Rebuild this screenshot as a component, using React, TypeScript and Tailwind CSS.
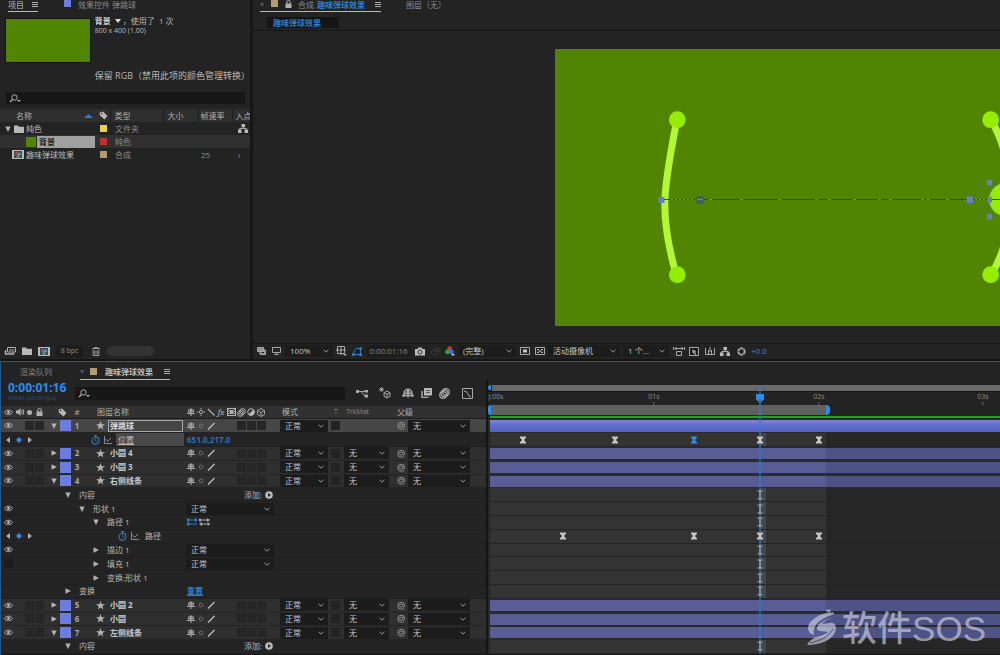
import React from "react";
import type { ReactNode } from "react";

/* ---------- icons ---------- */

type IconProps = { className?: string };

const Svg = ({ w, h, vb, className = "", children }: { w: number; h: number; vb?: string; className?: string; children: ReactNode }) => (
  <svg width={w} height={h} viewBox={vb ?? `0 0 ${w} ${h}`} fill="none" stroke="currentColor" strokeWidth="1" className={`shrink-0 ${className}`} aria-hidden="true">
    {children}
  </svg>
);

const MenuIcon = ({ className }: IconProps) => (
  <Svg w={6} h={7} className={className}><path d="M0 1.5h6M0 3.5h6M0 5.5h6" strokeWidth=".9" /></Svg>
);
const SearchIcon = () => (
  <Svg w={13} h={9} className="text-[#b5b5b5]"><circle cx="5.5" cy="3.5" r="2.7" /><path d="M3.5 5.5 1 8" strokeWidth="1.3" /><path d="M8 6h4l-2 2z" fill="currentColor" stroke="none" /></Svg>
);
const TagIcon = () => (
  <Svg w={9} h={9} className="text-[#b8b8b8]"><path d="M.5 1.5 4 .5 8.5 5 5.500 8.500 1 4.500z" fill="currentColor" stroke="none" /><circle cx="2.600" cy="2.600" r=".8" fill="#2b2b2b" stroke="none" /></Svg>
);
const FolderIcon = () => (
  <Svg w={10} h={8} className="text-[#b8b8b8]"><path d="M0 .5h4l1 1.200h5V8H0z" fill="currentColor" stroke="none" /></Svg>
);
const CompIcon = () => (
  <Svg w={12} h={9}><rect width="12" height="9" fill="#b9b9b9" stroke="none" /><rect x="2" y="1" width="8" height="7" fill="#3c4a58" stroke="none" /><circle cx="4.600" cy="3.500" r="1.600" fill="#c64b52" stroke="none" /><circle cx="7.500" cy="4" r="1.600" fill="#4b9fd8" stroke="none" /><path d="M4 7.500 6 4.500l2 3z" fill="#59b06c" stroke="none" /></Svg>
);
const FlowIcon = () => (
  <Svg w={10} h={9} className="text-[#b8b8b8]"><rect x="3.500" y="0" width="3.500" height="3" fill="currentColor" stroke="none" /><rect x="0" y="5.500" width="3.500" height="3.500" fill="currentColor" stroke="none" /><rect x="6.500" y="5.500" width="3.500" height="3.500" fill="currentColor" stroke="none" /><path d="M5.200 3v1.500M1.800 6V4.400h6.500V6" /></Svg>
);
const TrashIcon = () => (
  <Svg w={8} h={9} className="text-[#a0a0a0]"><path d="M0 1.500h8M2.500 1V.5h3V1M1.200 2.500v6h5.600v-6M3 3.500v4M5 3.500v4" /></Svg>
);
const FootageIcon = () => (
  <Svg w={12} h={8} className="text-[#b0b0b0]"><path d="M3.500.5h8v4.500h-8z" /><path d="M5 3h5" /><path d="M1.500 3v4h8V5.500" strokeWidth="1.500" /></Svg>
);
const LockIcon = () => (
  <Svg w={7} h={8} className="text-[#b0b0b0]"><rect x=".5" y="3.500" width="6" height="4.500" fill="currentColor" stroke="none" /><path d="M1.800 4V2a1.700 1.500 0 0 1 3.400 0v2" /></Svg>
);
const EyeIcon = () => (
  <Svg w={9} h={7} className="text-[#b5b5b5]"><path d="M.5 3.500C2.200.4 6.800.4 8.500 3.500 6.800 6.300 2.200 6.300.5 3.500z" /><circle cx="4.500" cy="3.200" r="1.500" fill="currentColor" stroke="none" /></Svg>
);
const SpeakerIcon = () => (
  <Svg w={9} h={8} className="text-[#b5b5b5]"><path d="M0 2.500h1.800L4.500.3v7.400L1.800 5.500H0z" fill="currentColor" stroke="none" /><path d="M5.500 2.500q1 1.500 0 3M6.800 1q2 3 0 6" /></Svg>
);
const StarIcon = () => (
  <Svg w={9} h={9} className="text-[#b5b5b5]"><path d="M4.500 0 5.600 3.200H9L6.300 5.200l1 3.300L4.500 6.500 1.700 8.500l1-3.300L0 3.200h3.400z" fill="currentColor" stroke="none" /></Svg>
);
const ShyIcon = () => (
  <Svg w={8} h={8} className="text-[#a8a8a8]"><path d="M1 4.500V3a3 2.600 0 0 1 6 0v1.500z" fill="currentColor" stroke="none" /><path d="M4 4v4M0 5.500h8" strokeWidth="1.100" /><path d="M2.700 1.500v2M5.300 1.500v2" stroke="#2d2d2d" strokeWidth=".6" /></Svg>
);
const SunIcon = ({ className = "text-[#a8a8a8]" }: IconProps) => (
  <Svg w={8} h={8} className={className}><circle cx="4" cy="4" r="1.600" /><path d="M4 0v1.500M4 6.500V8M0 4h1.500M6.500 4H8" /></Svg>
);
const DotSunIcon = () => (
  <Svg w={6} h={6} className="text-[#7a7a7a]"><circle cx="3" cy="3" r="1.900" strokeWidth=".8" /></Svg>
);
const SlashIcon = () => (
  <Svg w={8} h={8} className="text-[#c0c0c0]"><path d="M1 7.500 7.500 1" strokeWidth="1.200" /></Svg>
);
const BackSlashIcon = () => (
  <Svg w={8} h={8} className="text-[#b0b0b0]"><path d="M1 1l6.500 6.500" strokeWidth="1.200" /></Svg>
);
const FilmIcon = () => (
  <Svg w={9} h={8} className="text-[#b0b0b0]"><rect x=".5" y=".5" width="8" height="7" /><rect x="2.500" y="2" width="4" height="4" fill="currentColor" stroke="none" /><path d="M1.500 1v6M7.500 1v6" strokeDasharray="1 1" /></Svg>
);
const BlurIcon = ({ size = 9 }: { size?: number }) => (
  <Svg w={size} h={size} vb="0 0 9 9" className="text-[#a8a8a8]"><circle cx="5.700" cy="3.300" r="2.700" /><circle cx="4.500" cy="4.500" r="2.700" /><circle cx="3.300" cy="5.700" r="2.700" /></Svg>
);
const AdjustIcon = () => (
  <Svg w={8} h={8} className="text-[#b8b8b8]"><circle cx="4" cy="4" r="3.300" /><path d="M6.500 1.500A3.500 3.500 0 1 1 1.500 6.500z" fill="currentColor" stroke="none" /></Svg>
);
const CubeIcon = ({ className = "text-[#a8a8a8]" }: IconProps) => (
  <Svg w={8} h={9} className={className}><path d="M4 .6 7.500 2.500v4L4 8.400.5 6.500v-4zM.5 2.500 4 4.500l3.500-2M4 4.500v4" strokeWidth=".9" /></Svg>
);
const WhipIcon = () => (
  <Svg w={9} h={9} className="text-[#9a9a9a]"><path d="M5.800 3v2.500c.3 1 2 .8 2-1A3.500 3.500 0 1 0 4.500 8.200c1.500 0 2.500-.5 3-1.200M5.800 4.200a1.600 1.600 0 1 0-.1 1" strokeWidth=".9" /></Svg>
);
const StopwatchIcon = () => (
  <Svg w={9} h={10} className="text-[#2d7dca]"><circle cx="4.500" cy="5.700" r="3.400" strokeWidth="1.100" /><path d="M4.500 5.700V3.800M3 .6h3M4.500.5v2M7.300 2l.8.800M4.500 5.700l1.400.8" /></Svg>
);
const GraphLineIcon = () => (
  <Svg w={8} h={8} className="text-[#8b8b8b]"><path d="M.5 0v7.500H8M1.500 3l2 2.500L7 2" /></Svg>
);
const Twirl = ({ open }: { open: boolean }) => (
  <Svg w={6} h={6} className="text-[#b0b0b0]"><path d={open ? "M.3.500h5.400L3 6z" : "M.5.3v5.400L6 3z"} fill="currentColor" stroke="none" /></Svg>
);
const Chevron = () => (
  <Svg w={6} h={4} className="pointer-events-none absolute right-1 top-1/2 -translate-y-1/2 text-[#9a9a9a]"><path d="M.5.700 3 3.200 5.500.700" /></Svg>
);
const Hourglass = ({ className = "text-[#c4c4c4]" }: IconProps) => (
  <Svg w={7} h={8} className={className}><path d="M.5.500h6v1.300L4.500 4l2 2.200v1.300h-6V6.200l2-2.200-2-2.200z" fill="currentColor" stroke="none" /></Svg>
);
const Beam = () => (
  <Svg w={7} h={10} className="text-[#a3b4c4]"><path d="M1 1h5M1 9h5M3.500 1v8" strokeWidth="1.200" /></Svg>
);

/* ---------- controls ---------- */

const Select = ({ label, value, className = "" }: { label: string; value: string; className?: string }) => (
  <span className={`relative block h-[12px] shrink-0 bg-[#1c1c1c] ${className}`}>
    <select aria-label={label} defaultValue={value} className="block h-full w-full appearance-none truncate bg-transparent pl-[5px] pr-2 text-[8px] leading-[12px] text-[#c4c4c4] outline-none">
      <option>{value}</option>
    </select>
    <Chevron />
  </span>
);

const IconButton = ({ label, children, className = "" }: { label: string; children: ReactNode; className?: string }) => (
  <button type="button" aria-label={label} className={`flex shrink-0 items-center justify-center ${className}`}>{children}</button>
);

/* ---------- project panel ---------- */

type Asset = { name: string; type: string; rate: string; swatch: string; icon: ReactNode; selected?: boolean };

const assets: Asset[] = [
  { name: "纯色", type: "文件夹", rate: "", swatch: "bg-[#e6d24c]", icon: <><span className="mr-[3px] flex"><Twirl open /></span><FolderIcon /></> },
  { name: "背景", type: "纯色", rate: "", swatch: "bg-[#b93434]", icon: <span className="ml-[21px] h-[10px] w-[10px] bg-[#528404]" />, selected: true },
  { name: "趣味弹球效果", type: "合成", rate: "25", swatch: "bg-[#b49a74]", icon: <span className="ml-[7px] flex"><CompIcon /></span> },
];

const ProjectPanel = () => (
  <section className="flex w-[250px] shrink-0 flex-col bg-[#232323]">
    <nav className="flex h-[13px] shrink-0 items-start pl-2 text-[8px] leading-[9px]">
      <button type="button" className="flex h-[12px] w-[30px] items-start justify-between border-b border-[#b8b8b8] text-[#bdbdbd]">项目<MenuIcon className="mt-px" /></button>
      <button type="button" className="ml-[26px] flex items-start gap-[7px] text-[#8b8b8b]"><span className="h-[7px] w-[7px] bg-[#6b7de0]" />效果控件 弹跳球</button>
    </nav>
    <div className="flex shrink-0 gap-1 pl-[5px] pt-[5px]">
      <div className="h-[45px] w-[88px] border border-[#151515] bg-[#528404]" />
      <div className="flex h-[65px] flex-col text-[8px] text-[#b8b8b8]">
        <p className="mt-[-3px] flex h-[12px] items-center whitespace-pre leading-[12px]"><b className="text-[#d5d5d5]">背景</b><svg width="6" height="4" className="ml-1" aria-hidden="true"><path d="M0 0h6L3 4z" fill="#ddd" /></svg> ，使用了  1 次</p>
        <p className="text-[7px] leading-[8px]">800 x 400 (1.00)</p>
        <p className="mt-auto whitespace-nowrap pb-px text-[9px] leading-[12px]">保留 RGB（禁用此项的颜色管理转换）</p>
      </div>
    </div>
    <label className="mx-[6px] mr-[5px] mt-[9px] flex h-[12px] shrink-0 items-center bg-[#171717] pl-[3px]">
      <SearchIcon />
      <input aria-label="搜索项目" className="h-full min-w-0 flex-1 bg-transparent text-[8px] text-[#b5b5b5] outline-none" />
    </label>
    <table className="mt-[5px] w-full table-fixed border-collapse text-left text-[8px] leading-[12px] text-[#8b8b8b]">
      <colgroup><col className="w-[97px]" /><col className="w-[13px]" /><col className="w-[53px]" /><col className="w-[35px]" /><col className="w-[34px]" /><col /></colgroup>
      <thead className="bg-[#2e2e2e] text-[#b0b0b0]">
        <tr className="h-[13px]">
          <th className="p-0 pl-4 font-normal"><span className="flex items-center justify-between pr-1">名称<svg width="9" height="5" aria-hidden="true"><path d="M0 5 4.500 1 9 5z" fill="#2d7dca" /></svg></span></th>
          <th className="p-0"><span className="flex justify-center"><TagIcon /></span></th>
          <th className="border-l border-[#1c1c1c] p-0 pl-1 font-normal">类型</th>
          <th className="border-l border-[#1c1c1c] p-0 pl-1 font-normal">大小</th>
          <th className="border-l border-[#1c1c1c] p-0 pl-[2px] font-normal">帧速率</th>
          <th className="overflow-hidden whitespace-nowrap border-l border-[#1c1c1c] p-0 pl-[3px] font-normal">入点</th>
        </tr>
      </thead>
      <tbody>
        {assets.map((a, i) => (
          <tr key={a.name} className={`h-[13px] ${a.selected ? "bg-[#303030]" : ""}`}>
            <td className="p-0 pl-[5px]">
              <span className="flex h-[13px] items-center">
                {a.icon}
                {a.selected
                  ? <b className="ml-px mr-[2px] flex h-[12px] flex-1 items-center bg-[#a0a0a0] pl-[2px] text-[#202020]">{a.name}</b>
                  : <span className="ml-[2px] whitespace-nowrap text-[#bdbdbd]">{a.name}</span>}
              </span>
            </td>
            <td className="p-0"><span className={`mx-auto block h-[7px] w-[7px] ${a.swatch}`} /></td>
            <td className="p-0 pl-[5px]">{a.type}</td>
            <td className="p-0" />
            <td className="p-0 pl-[3px]">{a.rate}</td>
            <td className="p-0 pl-[6px]">{i === 0 ? <FlowIcon /> : i === 2 ? "ı" : null}</td>
          </tr>
        ))}
      </tbody>
    </table>
    <footer className="mt-auto flex h-[16px] shrink-0 items-center pl-[4px] text-[7px] text-[#8b8b8b]">
      <IconButton label="解释素材"><FootageIcon /></IconButton>
      <IconButton label="新建文件夹" className="ml-[6px]"><FolderIcon /></IconButton>
      <IconButton label="新建合成" className="ml-[6px]"><CompIcon /></IconButton>
      <button type="button" className="ml-[6px] h-[12px] w-[27px] bg-[#1d1d1d]">8 bpc</button>
      <IconButton label="删除" className="ml-[9px]"><TrashIcon /></IconButton>
      <span className="ml-[7px] h-[10px] w-[47px] rounded-full bg-[#333333]" />
    </footer>
  </section>
);

/* ---------- composition viewer ---------- */

const pathDots = [709, 740, 778, 815, 828, 853, 878, 889, 921, 927, 946];
const denseDots = [671, 675, 679, 683, 687, 691, 975, 979, 983];

const Artwork = () => (
  <svg className="h-full w-full" role="img" aria-label="弹球动画">
    <g transform="translate(-555 -49)">
      <g fill="none" stroke="#b2f835" strokeWidth="7">
        <path d="M676.500 122C670 155 664.800 188 664.800 204C664.800 225 669 249 675.500 272" />
        <path d="M991 120Q1009 150 1012 200M991 275Q1009 246 1012 200" />
      </g>
      <g fill="#95ee00">
        <circle cx="677.300" cy="119.700" r="8.400" /><circle cx="677.300" cy="274.700" r="8.400" />
        <circle cx="990.700" cy="119.700" r="8.400" /><circle cx="990.700" cy="274.700" r="8.400" />
        <circle cx="1006" cy="199.500" r="16.600" stroke="#9db0a8" strokeWidth=".8" />
      </g>
      <path d="M661 199.500h339" stroke="#36550d" strokeWidth="1" />
      <g fill="#6a7dcc">
        {pathDots.map((x) => <rect key={x} x={x} y="199" width="3" height="1" />)}
        {denseDots.map((x) => <rect key={x} x={x} y="199" width="2" height="1" />)}
        <rect x="658.500" y="197" width="6" height="6" /><rect x="966.500" y="196.500" width="6.500" height="6.500" />
        <rect x="987" y="180" width="5" height="5.500" /><rect x="987" y="197" width="5" height="5.500" /><rect x="987" y="214" width="5" height="5.500" />
      </g>
      <rect x="697" y="197" width="6" height="6" fill="#4b6350" stroke="#3b4f8c" /><path d="M697 199.500h6" stroke="#6a7dcc" />
    </g>
  </svg>
);

const ViewerPanel = () => (
  <section className="flex min-w-0 flex-1 flex-col bg-[#232323]">
    <nav className="flex h-[14px] shrink-0 items-start pl-[7px] text-[8px] leading-[9px] text-[#8b8b8b]">
      <button type="button" className="flex h-[12px] items-start border-b border-[#b8b8b8]">
        <span className="w-[11px] text-left text-[7px]">×</span>
        <span className="h-[7px] w-[7px] bg-[#b49a74]" />
        <span className="ml-[7px] flex w-[13px]"><LockIcon /></span>
        合成<span className="ml-[3px] mr-[10px] font-bold text-[#2d7dca]">趣味弹球效果</span><MenuIcon className="mt-px text-[#b8b8b8]" />
      </button>
      <button type="button" className="ml-[25px]">图层（无）</button>
    </nav>
    <div className="flex h-[17px] shrink-0 items-center border-b border-[#171717] pl-[14px]">
      <button type="button" className="h-[11px] w-[72px] bg-[#151515] pl-[6px] text-left text-[8px] font-bold leading-[11px] text-[#2d7dca]">趣味弹球效果</button>
    </div>
    <div className="flex min-h-0 flex-1 pb-[17px] pl-[302px] pt-[18px]">
      <div className="min-w-0 flex-1 overflow-hidden bg-[#528404]"><Artwork /></div>
    </div>
    <footer className="flex h-[16px] shrink-0 items-start border-t border-[#171717] pl-[4px] pt-px text-[8px] text-[#a8a8a8]">
      <div className="flex h-[12px] items-center">
        <IconButton label="始终预览此视图"><Svg w={9} h={8}><path d="M.5.5h6v4h-6zM3 3h5.500v4.500H3z" fill="#8a8a8a" /><path d="M4.500 5.500h2.500" stroke="#222" /></Svg></IconButton>
        <IconButton label="主查看器" className="ml-[6px]"><Svg w={9} h={8}><path d="M.5.5h8v5h-8zM4.500 5.500v2M2.500 7.500h4" /></Svg></IconButton>
        <Select label="放大率" value="100%" className="ml-[4px] w-[48px]" />
        <IconButton label="网格" className="ml-[3px]"><Svg w={11} h={10}><path d="M1.500.5h7v7h-7zM0 4h10M5 0v9" /><path d="M7 8h4L9 10z" fill="currentColor" stroke="none" /></Svg></IconButton>
        <IconButton label="蒙版可见性" className="ml-[5px] text-[#2d7dca]"><Svg w={10} h={9}><path d="M1.500 7.500Q2 2 4.500 1.500h4v6z" /><path d="M0 6.500h2.500V9H0zM7.500 6.500H10V9H7.500zM7.500.3H10v2.500H7.500z" fill="currentColor" stroke="none" /></Svg></IconButton>
        <button type="button" className="ml-[4px] h-[12px] w-[45px] bg-[#1d1d1d] text-[#858585]">0:00:01:16</button>
        <IconButton label="快照" className="ml-[4px]"><Svg w={10} h={9}><path d="M0 2h2.500L3.500.5h3l1 1.500H10v6.500H0z" fill="#bcbcbc" stroke="none" /><circle cx="5" cy="5" r="2" stroke="#303030" /></Svg></IconButton>
        <IconButton label="显示快照" className="ml-[5px] text-[#3a3a3a]"><Svg w={11} h={9}><circle cx="4" cy="5.500" r="2.700" /><circle cx="8" cy="3" r="2" /></Svg></IconButton>
        <IconButton label="显示通道" className="ml-[4px]"><Svg w={10} h={10}><circle cx="4.700" cy="2.600" r="2.400" fill="#c83a36" stroke="none" /><circle cx="2.500" cy="5.900" r="2.400" fill="#3d9f42" stroke="none" /><circle cx="6.400" cy="5.900" r="2.400" fill="#3e6ed8" stroke="none" /><path d="M6 8h4L8 10z" fill="#c8c8c8" stroke="none" /></Svg></IconButton>
        <Select label="分辨率" value="(完整)" className="ml-[3px] w-[58px]" />
        <IconButton label="目标区域" className="ml-[4px]"><Svg w={10} h={8}><path d="M.5.5h9v7h-9z" /><path d="M3 2.500h4v3H3z" fill="#c8c8c8" stroke="none" /></Svg></IconButton>
        <IconButton label="透明网格" className="ml-[5px]"><Svg w={10} h={8}><path d="M.5.5h9v7h-9z" /><path d="M2 2h2v1.300H2zM6 2h2v1.300H6zM4 3.300h2v1.400H4zM2 4.700h2V6H2zM6 4.700h2V6H6z" fill="currentColor" stroke="none" /></Svg></IconButton>
        <Select label="3D 视图" value="活动摄像机" className="ml-[3px] w-[72px]" />
        <Select label="视图布局" value="1 个…" className="ml-[3px] w-[46px]" />
        <IconButton label="像素长宽比" className="ml-[4px]"><Svg w={12} h={9}><path d="M2 1.500h8M3.500 0 2 1.500 3.500 3M8.500 0 10 1.500 8.500 3M3.500 4.500h5v4h-5zM.5 0v3M11.500 0v3" /></Svg></IconButton>
        <IconButton label="快速预览" className="ml-[4px] bg-[#171717]"><Svg w={10} h={9}><path d="M.5.5h9v8h-9z" /><path d="M3 2.500 7.500 4 6 5l1.500 2L6.500 8 5 6 4 7z" fill="currentColor" stroke="none" /></Svg></IconButton>
        <IconButton label="时间轴" className="ml-[6px]"><Svg w={10} h={8}><path d="M.5 1v6.500h9V1M3.500 3v4M6.500 3v4M5 0v5" /></Svg></IconButton>
        <IconButton label="流程图" className="ml-[5px]"><FlowIcon /></IconButton>
        <IconButton label="重置曝光度" className="ml-[7px]"><Svg w={9} h={9}><circle cx="4.500" cy="4.500" r="3.200" strokeWidth="1.900" strokeDasharray="2.900 .45" /></Svg></IconButton>
        <button type="button" className="ml-[5px] text-[#2d8ceb]">+0.0</button>
      </div>
    </footer>
  </section>
);

/* ---------- timeline ---------- */

type Row = {
  kind: "layer" | "group" | "key";
  name: string;
  index?: number;
  open?: boolean;
  selected?: boolean;
  depth?: number;
  eye?: "on" | "off";
  extra?: ReactNode;
  keys?: { x: number; active?: boolean }[];
};

const ModeSelect = () => <Select label="混合模式" value="正常" className="w-[88px]" />;
const AddContent = () => (
  <button type="button" className="ml-[58px] flex items-center gap-[3px] text-[8px] text-[#b8b8b8]">添加:<Svg w={8} h={8}><circle cx="4" cy="4" r="3.800" fill="#bdbdbd" stroke="none" /><path d="M3 2v4l3-2z" fill="#222" stroke="none" /></Svg></button>
);

const rows: Row[] = [
  { kind: "layer", name: "弹跳球", index: 1, open: true, selected: true },
  { kind: "key", name: "位置", depth: 0, selected: true, extra: <button type="button" className="ml-px text-[8px] font-bold text-[#2a70b5]">651.0,217.0</button>, keys: [{ x: 523 }, { x: 615 }, { x: 694, active: true }, { x: 760 }, { x: 819 }] },
  { kind: "layer", name: "小圆 4", index: 2 },
  { kind: "layer", name: "小圆 3", index: 3 },
  { kind: "layer", name: "右侧线条", index: 4, open: true },
  { kind: "group", name: "内容", depth: 0, open: true, extra: <AddContent /> },
  { kind: "group", name: "形状 1", depth: 1, open: true, eye: "on", extra: <ModeSelect /> },
  { kind: "group", name: "路径 1", depth: 2, open: true, eye: "on", extra: <Svg w={24} h={8} className="ml-px"><path d="M0 2h10M0 6h10" stroke="#2d7dca" /><path d="M0 .5h2.500v3H0zM7.500.5H10v3H7.500zM0 4.500h2.500v3H0z" fill="#2d7dca" stroke="none" /><path d="M13 2h9M13 6h9" stroke="#aaa" /><path d="M20 0l3 2-3 2zM15 4l-3 2 3 2zM12 .7h2v2.500h-2zM20.500 4.700h2v2.500h-2z" fill="#aaa" stroke="none" /></Svg> },
  { kind: "key", name: "路径", depth: 2, keys: [{ x: 563 }, { x: 694 }, { x: 760 }, { x: 819 }] },
  { kind: "group", name: "描边 1", depth: 2, eye: "on", extra: <ModeSelect /> },
  { kind: "group", name: "填充 1", depth: 2, eye: "off", extra: <ModeSelect /> },
  { kind: "group", name: "变换:形状 1", depth: 2 },
  { kind: "group", name: "变换", depth: 0, extra: <button type="button" className="ml-px text-[8px] font-bold text-[#2d7dca] underline">重置</button> },
  { kind: "layer", name: "小圆 2", index: 5 },
  { kind: "layer", name: "小圆", index: 6 },
  { kind: "layer", name: "左侧线条", index: 7, open: true },
  { kind: "group", name: "内容", depth: 0, open: true, extra: <AddContent /> },
];

const indent = ["pl-[64px]", "pl-[78px]", "pl-[92px]"];
const keyIndent = ["pl-[45px]", "pl-[72px]", "pl-[72px]"];

const Cell = ({ children }: { children?: ReactNode }) => <span className="flex w-[10px] shrink-0 items-center justify-center">{children}</span>;
const Box = () => <span className="block h-[9px] w-[9px] bg-[#262626]" />;

const LayerRow = ({ row }: { row: Row }) => (
  <div className={`flex min-h-0 flex-1 items-center border-b border-[#242424] ${row.selected ? "bg-[#464646]" : "bg-[#2f2f2f]"}`}>
    <IconButton label="可见性" className="w-[15px]"><EyeIcon /></IconButton>
    <span className="w-[8px]" />
    <Cell><Box /></Cell><Cell><Box /></Cell>
    <IconButton label="展开图层" className="ml-[4px] w-[12px]"><Twirl open={!!row.open} /></IconButton>
    <span className="h-[11px] w-[11px] bg-[#6b7de0]" />
    <span className="w-[12px] text-center text-[8px] font-bold text-[#a8a8a8]">{row.index}</span>
    <span className="flex w-[103px] items-center pl-[13px]">
      <StarIcon />
      {row.selected
        ? <span className="ml-[3px] flex h-[12px] w-[75px] items-center border border-[#a8a8a8] pl-px text-[8px] font-bold text-[#dcdcdc]">{row.name}</span>
        : <span className="ml-[5px] whitespace-nowrap text-[8px] font-bold text-[#c8c8c8]">{row.name}</span>}
    </span>
    <Cell><ShyIcon /></Cell><Cell><DotSunIcon /></Cell><Cell><SlashIcon /></Cell>
    <Cell /><Cell /><Cell><Box /></Cell><Cell><Box /></Cell><Cell><Box /></Cell>
    <Select label="混合模式" value="正常" className="ml-[14px] w-[48px]" />
    <span className="ml-[3px] mr-[4px] block h-[9px] w-[9px] bg-[#232323]" />
    {row.selected ? <span className="w-[45px]" /> : <Select label="轨道遮罩" value="无" className="w-[45px]" />}
    <IconButton label="父级关联器" className="ml-[6px] w-[13px]"><WhipIcon /></IconButton>
    <Select label="父级" value="无" className="w-[62px]" />
  </div>
);

const KeyNav = () => (
  <button type="button" aria-label="关键帧导航" className="flex w-[45px] shrink-0 items-center pl-[4px]">
    <Svg w={30} h={8}><path d="M5 1v6L1 4zM23 1v6l4-3z" fill="#b0b0b0" stroke="none" /><path d="M14 1l3 3-3 3-3-3z" fill="#2d8ceb" stroke="none" /></Svg>
  </button>
);

const PropertyRow = ({ row }: { row: Row }) => {
  const depth = row.depth ?? 0;
  return (
    <div className="flex min-h-0 flex-1 items-center border-b border-[#1f1f1f] bg-[#242424]">
      {row.kind === "key" ? (
        <div className="flex h-full w-[185px] shrink-0 items-center">
          <KeyNav />
          <span className={`flex h-full min-w-0 flex-1 items-center ${keyIndent[depth]}`}>
            <StopwatchIcon /><span className="ml-[4px] flex"><GraphLineIcon /></span>
            <span className={`flex h-full items-center whitespace-nowrap text-[8px] text-[#bdbdbd] ${row.selected ? "ml-[4px] mr-[2px] flex-1 bg-[#484848] pl-[2px] underline" : "ml-[6px]"}`}>{row.name}</span>
          </span>
        </div>
      ) : (
        <div className="flex h-full w-[185px] shrink-0 items-center">
          <span className="-mr-[15px] flex w-[15px] justify-center">
            {row.eye === "on" && <EyeIcon />}
            {row.eye === "off" && <span className="block h-[9px] w-[9px] bg-[#1c1c1c]" />}
          </span>
          <button type="button" className={`flex items-center gap-2 whitespace-nowrap text-[8px] text-[#b8b8b8] ${indent[depth]}`}><Twirl open={!!row.open} />{row.name}</button>
        </div>
      )}
      {row.extra}
    </div>
  );
};

const LayerHeader = () => (
  <div className="flex h-[13px] shrink-0 items-center border-b border-[#1b1b1b] bg-[#313131] text-[8px] text-[#b0b0b0]">
    <span className="flex w-[15px] justify-center"><EyeIcon /></span>
    <span className="flex w-[8px] justify-center"><SpeakerIcon /></span>
    <Cell><span className="h-[5px] w-[5px] rounded-full bg-[#b0b0b0]" /></Cell><Cell><LockIcon /></Cell>
    <span className="ml-[10px] flex w-[17px] justify-center"><TagIcon /></span>
    <span className="w-[12px] text-center">#</span>
    <span className="w-[103px] whitespace-nowrap pl-[14px]">图层名称</span>
    <Cell><ShyIcon /></Cell><Cell><SunIcon /></Cell><Cell><BackSlashIcon /></Cell>
    <Cell><i className="font-serif text-[9px]">fx</i></Cell><Cell><FilmIcon /></Cell><Cell><BlurIcon /></Cell><Cell><AdjustIcon /></Cell><Cell><CubeIcon /></Cell>
    <span className="ml-[16px] w-[52px]">模式</span>
    <span className="w-[12px] text-[7px] text-[#8b8b8b]">T</span>
    <span className="w-[51px] text-[7px] text-[#8b8b8b]">TrkMat</span>
    <span>父级</span>
  </div>
);

const TimelineToolbar = () => (
  <div className="flex h-[26px] shrink-0 items-center text-[#a8a8a8]">
    <div className="flex h-full w-[74px] shrink-0 flex-col pl-[7px] pt-px">
      <button type="button" className="text-left text-[12px] font-bold leading-[13px] text-[#2d8ceb]">0:00:01:16</button>
      <span className="whitespace-nowrap text-[6px] leading-[9px] text-[#20598f]">00041 (25.00 fps)</span>
    </div>
    <label className="flex h-[13px] w-[270px] shrink-0 items-center bg-[#171717] pl-[3px]">
      <SearchIcon />
      <input aria-label="搜索图层" className="h-full min-w-0 flex-1 bg-transparent text-[8px] outline-none" />
    </label>
    <IconButton label="合成微型流程图" className="ml-[11px]"><Svg w={12} h={9}><path d="M0 2.500h9M5 2.500 9 7" /><path d="M0 1h3v3H0zM8.500 1h3.500v2.500H8.500zM8.500 5.500H12V8.500H8.500z" fill="currentColor" stroke="none" /></Svg></IconButton>
    <IconButton label="草图 3D" className="ml-[11px]"><Svg w={12} h={12}><path d="M8 4l3 1.700v3.600L8 11 5 9.300V5.700zM5 5.700l3 1.700 3-1.700M8 7.400V11" /><path d="M2.500 0v5M0 2.500h5M.7.7l3.600 3.600M4.300.7.7 4.300" strokeWidth=".8" /></Svg></IconButton>
    <IconButton label="隐藏消隐图层" className="ml-[11px]"><Svg w={12} h={10}><path d="M1.500 6V4.500a4.500 4 0 0 1 9 0V6z" fill="currentColor" stroke="none" /><path d="M0 7.500h12M6 5v4.500M2 6v3M10 6v3" strokeWidth="1.500" /><path d="M4 2v3M8 2v3" stroke="#222" /></Svg></IconButton>
    <IconButton label="帧混合" className="ml-[7px]"><Svg w={11} h={10}><rect x="3" y="0" width="8" height="7.500" fill="#b8b8b8" stroke="none" /><path d="M1 3v6.500h6.500" strokeWidth="1.500" /><path d="M5 2.500h4M5 4.500h4" stroke="#555" /></Svg></IconButton>
    <IconButton label="运动模糊" className="ml-[7px]"><BlurIcon size={11} /></IconButton>
    <IconButton label="图表编辑器" className="ml-[12px]"><Svg w={11} h={11}><path d="M.5.5h10v10H.5zM2 3q3 0 4 3t3 3" /></Svg></IconButton>
  </div>
);

const tracksOffset = 488;
const at = (x: number) => ({ left: x - tracksOffset });

const TrackRow = ({ row }: { row: Row }) => {
  if (row.kind === "layer") {
    return (
      <div className="flex min-h-0 flex-1 items-start bg-[#2a2a2a] pl-[2px] pt-px">
        {row.selected
          ? <span className="h-[12px] flex-1 bg-linear-to-b from-[#7c86cf] via-[#5f6bd0] to-[#5260c4]" />
          : <><span className="h-[11px] w-[336px] bg-[#585d95]" /><span className="h-[11px] flex-1 bg-[#4d5385]" /></>}
      </div>
    );
  }
  return (
    <div className="relative flex min-h-0 flex-1 items-center border-b border-[#242424] bg-[#262626]">
      <span className="ml-[2px] h-full w-[336px] bg-[#333333]" />
      <span className="absolute h-full w-[6px] bg-[#454748]" style={at(760)} />
      {(row.keys ?? []).map((k) => (
        <span key={k.x} className="absolute z-20 -translate-x-1/2" style={at(k.x)}><Hourglass className={k.active ? "text-[#2d8ceb]" : "text-[#c4c4c4]"} /></span>
      ))}
      {row.kind === "group" && <span className="absolute z-20 -translate-x-1/2" style={at(760)}><Beam /></span>}
    </div>
  );
};

const ticks = [{ x: 654, t: "01s" }, { x: 819, t: "02s" }, { x: 983, t: "03s" }];

const Tracks = () => (
  <div className="relative flex min-w-0 flex-1 flex-col overflow-hidden">
    <div className="mt-[5px] flex h-[6px] shrink-0 items-stretch">
      <span className="h-[5px] w-[3px] rounded-l-full bg-[#2d8ceb]" /><span className="ml-px flex-1 bg-[#696969]" />
    </div>
    <div className="relative h-[14px] shrink-0 overflow-hidden border-t border-[#151515] text-[7px] leading-[10px] text-[#8b8b8b]">
      <span className="absolute left-0">):00s</span>
      {ticks.map((k) => (
        <span key={k.t} className="absolute flex -translate-x-1/2 flex-col items-center" style={at(k.x)}>{k.t}<i className="h-[4px] w-px bg-[#6a6a6a]" /></span>
      ))}
    </div>
    <div className="flex h-[10px] shrink-0">
      <span className="w-[3px] rounded-l-sm bg-[#2d8ceb]" /><span className="h-[10px] w-[335px] bg-[#606060]" /><span className="w-[4px] rounded-r-sm bg-[#2d8ceb]" />
    </div>
    <div className="ml-[2px] mt-px mb-px h-[2px] shrink-0 bg-[#18a820]" />
    {rows.map((r, i) => <TrackRow key={i} row={r} />)}
    <div className="absolute bottom-0 left-[271px] top-[5px] z-10 w-[2px] bg-[#2d7dca]/60" />
    <svg width="8" height="9" className="absolute left-[268px] top-[14px] z-20" aria-hidden="true"><path d="M0 0h8v5.500L4 9 0 5.500z" fill="#2d8ceb" /><path d="M4 5v3" stroke="#12477c" /></svg>
  </div>
);

const Watermark = () => (
  <div className="pointer-events-none absolute bottom-[8px] right-[14px] z-30 flex items-center gap-[4px] text-[#cfd0e2] opacity-65">
    <svg width="31" height="37" viewBox="0 0 31 37" fill="currentColor" aria-hidden="true">
      <path d="M24 3C11 5 1 12 1 19c0 4 3 6 6 7C5 18 11 10 25 6z" />
      <path d="M27 8C16 11 9 16 10 20c1 3 7 2 11 3-3 3-8 4-12 5C5 30 2 32 0 36c13 0 28-5 29-17 0-4-3-6-7-5-3 1-6 1-7 0 2-2 7-4 12-6z" />
      <path d="M3 34C12 32 22 28 26 20" fill="none" stroke="#4d5385" strokeWidth="1" />
      <path d="M19 0l2 1 2-1 1 2-2 1-2 0zM24 4l2-1 1 2-2 1z" />
    </svg>
    <span className="whitespace-nowrap font-['Liberation_Sans','Noto_Sans_CJK_SC',sans-serif] text-[35px] leading-[36px]"><span className="font-['Noto_Sans_CJK_SC',sans-serif] font-medium">软件</span>SOS</span>
  </div>
);

const Timeline = () => (
  <section className="relative flex min-h-0 grow-[294] basis-0 flex-col border-l border-t border-[#245a8f] bg-[#232323]">
    <nav className="flex h-[18px] shrink-0 items-end text-[8px] leading-[15px]">
      <button type="button" className="ml-[19px] h-[17px] text-[#858585]">渲染队列</button>
      <button type="button" className="ml-[28px] flex h-[17px] items-center border-b border-[#b8b8b8] font-bold text-[#b8b8b8]">
        <span className="w-[10px] text-left text-[7px] font-normal text-[#858585]">×</span>
        <span className="mr-[8px] h-[7px] w-[7px] bg-[#b49a74]" />趣味弹球效果<MenuIcon className="ml-[11px]" />
      </button>
    </nav>
    <div className="flex min-h-0 flex-1">
      <div className="flex w-[485px] shrink-0 flex-col">
        <TimelineToolbar />
        <LayerHeader />
        {rows.map((r, i) => (r.kind === "layer" ? <LayerRow key={i} row={r} /> : <PropertyRow key={i} row={r} />))}
      </div>
      <div className="w-[2px] shrink-0 bg-[#151515]" />
      <Tracks />
    </div>
    <div className="h-px shrink-0 bg-[#1a1a1a]" />
    <Watermark />
  </section>
);

export default function App() {
  return (
    <main className="flex h-screen flex-col overflow-hidden bg-[#161616] font-['Open_Sans','Noto_Sans_CJK_SC',sans-serif]">
      <div className="flex min-h-0 grow-[361] basis-0 gap-[3px] pb-[2px]">
        <ProjectPanel />
        <ViewerPanel />
      </div>
      <Timeline />
    </main>
  );
}
